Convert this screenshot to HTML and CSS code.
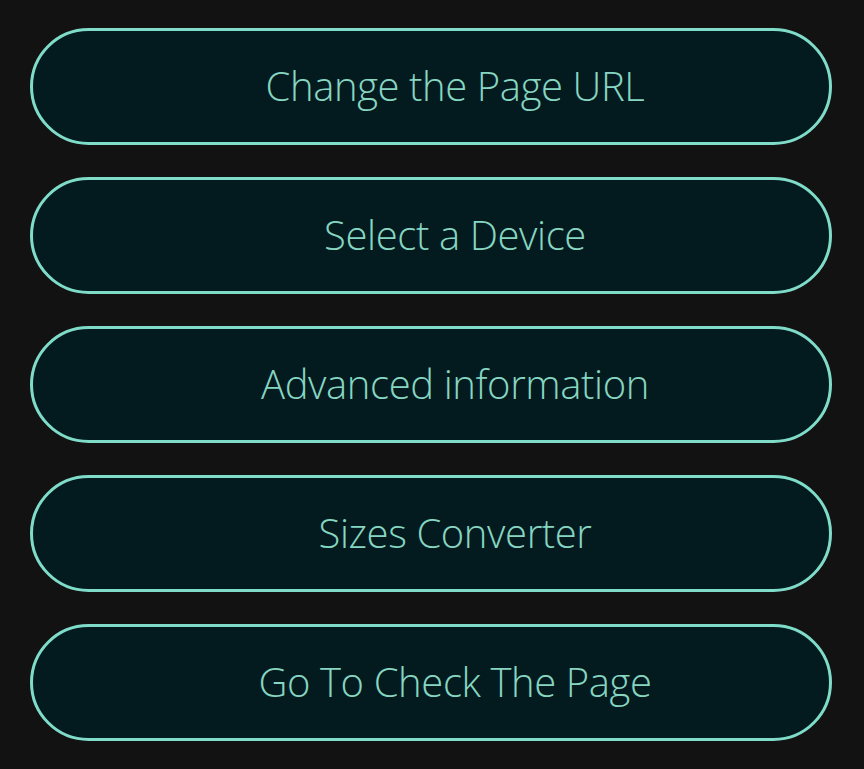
FILE: index.html
```html
<!DOCTYPE html>
<html lang="en">
<head>
<meta charset="utf-8">
<title>Menu</title>
<link rel="stylesheet" href="styles.css">
</head>
<body>
<nav class="menu">
  <button class="menu-btn">Change the Page URL</button>
  <button class="menu-btn">Select a Device</button>
  <button class="menu-btn">Advanced information</button>
  <button class="menu-btn">Sizes Converter</button>
  <button class="menu-btn">Go To Check The Page</button>
</nav>
</body>
</html>
```
FILE: styles.css
```css
html, body {
  margin: 0;
  padding: 0;
  background: #121212;
  height: 100%;
}
.menu {
  display: flex;
  flex-direction: column;
  gap: 32px;
  padding: 28px 32px 0 30px;
}
.menu-btn {
  height: 117px;
  width: 100%;
  border: 3px solid #7fdcc8;
  border-radius: 60px;
  background: #031b1e;
  color: #86d6c2;
  font-family: "Open Sans", "Noto Sans", sans-serif;
  font-weight: 300;
  font-size: 40px;
  letter-spacing: -0.4px;
  padding: 0 0 2px 48px;
  cursor: pointer;
}
```
